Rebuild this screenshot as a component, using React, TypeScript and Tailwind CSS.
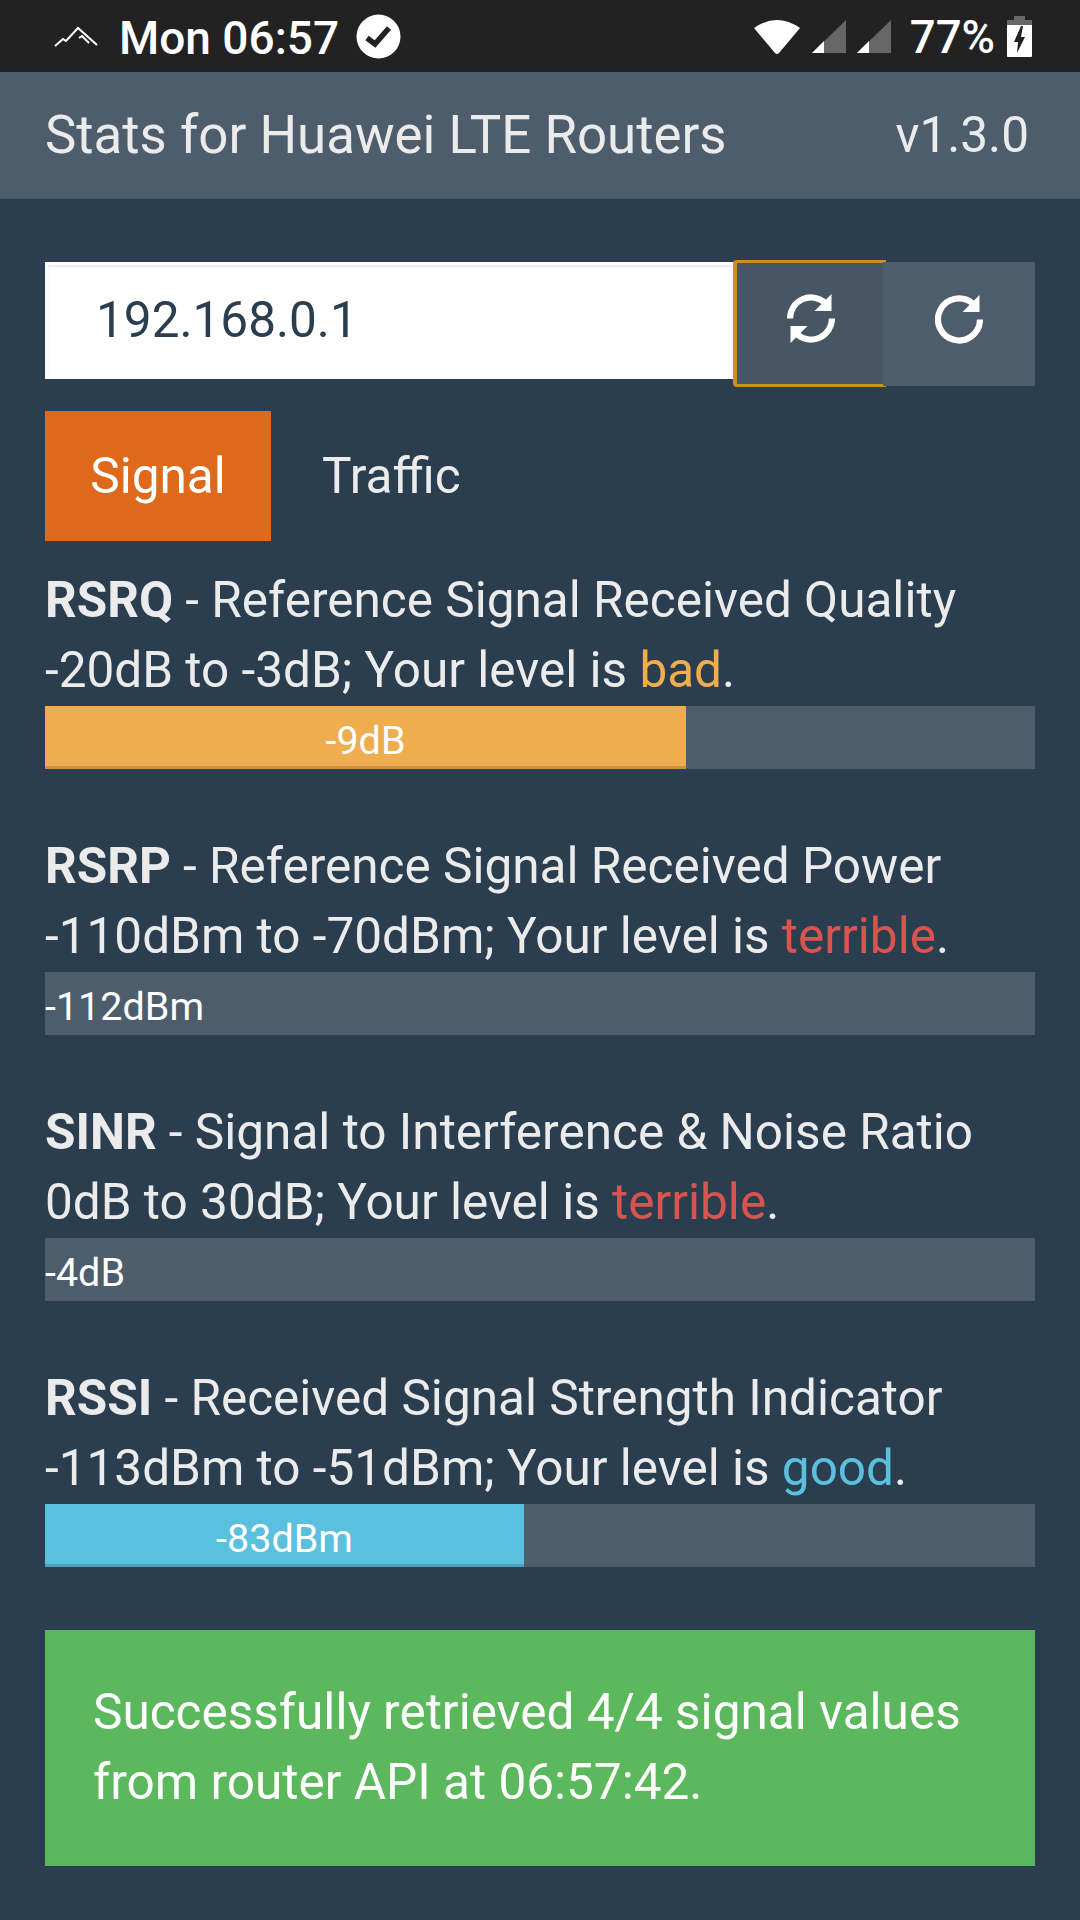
const levelColors: Record<string, string> = {
  bad: "text-[#f0ad4e]",
  terrible: "text-[#d9534f]",
  good: "text-[#5bc0de]",
};

const stats = [
  { name: "RSRQ", title: "Reference Signal Received Quality", range: "-20dB to -3dB", level: "bad", value: "-9dB", width: 641, fill: "bg-[#eead4f]" },
  { name: "RSRP", title: "Reference Signal Received Power", range: "-110dBm to -70dBm", level: "terrible", value: "-112dBm", width: 0, fill: "" },
  { name: "SINR", title: "Signal to Interference & Noise Ratio", range: "0dB to 30dB", level: "terrible", value: "-4dB", width: 0, fill: "" },
  { name: "RSSI", title: "Received Signal Strength Indicator", range: "-113dBm to -51dBm", level: "good", value: "-83dBm", width: 479, fill: "bg-[#5bc0de]" },
];

function SyncIcon() {
  return (
    <svg className="mb-[10px] mr-[2px]" width="48" height="49" viewBox="0 0 48 49" fill="white">
      <path d="M3 24.5 A21 21 0 0 1 38 8.8" fill="none" stroke="white" strokeWidth="6.2" />
      <path d="M45 24.5 A21 21 0 0 1 10 40.2" fill="none" stroke="white" strokeWidth="6.2" />
      <path d="M44.5 0 V17 H27.5 Z" />
      <path d="M3.5 49 V32 H20.5 Z" />
    </svg>
  );
}

function RedoIcon() {
  return (
    <svg className="mb-[10px]" width="48" height="49" viewBox="0 0 48 49" fill="white">
      <path d="M38 8.8 A21 21 0 1 0 45 24.5" fill="none" stroke="white" strokeWidth="6.2" />
      <path d="M44.5 0 V17 H27.5 Z" />
    </svg>
  );
}

function StatusBar() {
  return (
    <div className="h-[72px] bg-[#222222] flex items-center justify-between pl-[54px] pr-[48px] text-white">
      <div className="flex items-center">
        <svg width="44" height="24" viewBox="0 0 44 24" fill="none" stroke="white" strokeWidth="2">
          <path d="M1 22 L9 15 L12 17 L24 4 L43 21" />
          <path d="M25 14 L28 12 L35 19" />
        </svg>
        <span className="ml-[21px] mt-[3px] text-[46px] font-medium leading-none">Mon 06:57</span>
        <svg className="ml-[17px]" width="45" height="45" viewBox="0 0 45 45">
          <circle cx="22.5" cy="22.5" r="22" fill="white" />
          <path d="M11 24 L19 30 L33 14" fill="none" stroke="#222222" strokeWidth="5.5" />
        </svg>
      </div>
      <div className="flex items-center">
        <svg width="46" height="37" viewBox="0 0 46 37">
          <path d="M0 10 Q23 -6 46 10 L25 35 Q23 37 21 35 Z" fill="white" />
        </svg>
        <svg className="ml-[12px]" width="34" height="34" viewBox="0 0 34 34">
          <path d="M34 1 L34 34 L0 34 Z" fill="#666666" />
          <path d="M12 22 L12 34 L0 34 Z" fill="white" />
        </svg>
        <svg className="ml-[11px]" width="34" height="34" viewBox="0 0 34 34">
          <path d="M34 1 L34 34 L0 34 Z" fill="#666666" />
          <path d="M12 22 L12 34 L0 34 Z" fill="white" />
        </svg>
        <span className="ml-[19px] mt-[3px] text-[45.5px] font-medium leading-none">77%</span>
        <svg className="ml-[12px]" width="25" height="41" viewBox="0 0 25 41">
          <path d="M7 0 H18 V4 H25 V10 H0 V4 H7 Z" fill="#666666" />
          <path d="M0 9 H25 V40 Q25 41 24 41 H1 Q0 41 0 40 Z" fill="white" />
          <path d="M14 10 L7 26 H11 L10 37 L18 21 H14 L16 10 Z" fill="#222222" />
        </svg>
      </div>
    </div>
  );
}

function StatBlock({ stat }: { stat: (typeof stats)[number] }) {
  return (
    <div className="mb-[62px]">
      <p>
        <b className="font-bold">{stat.name}</b> - {stat.title}
        <br />
        {stat.range}; Your level is <span className={levelColors[stat.level]}>{stat.level}</span>.
      </p>
      <div className="h-[63px] bg-[#4e5d6c] text-white text-[39.5px] leading-[70px] flex overflow-hidden mt-[1px]">
        {stat.width > 0 ? (
          <div
            className={`${stat.fill} text-center h-full shadow-[inset_0_-3px_0_rgba(0,0,0,0.15)]`}
            style={{ width: stat.width }}
          >
            {stat.value}
          </div>
        ) : (
          <span>{stat.value}</span>
        )}
      </div>
    </div>
  );
}

export default function App() {
  return (
    <div
      className="w-[1080px] h-[1920px] bg-[#2b3e50] text-[#ebebeb] text-[49.5px] leading-[70px] overflow-hidden"
      style={{ fontFamily: "Roboto, sans-serif" }}
    >
      <StatusBar />
      <header className="h-[127px] pb-[1px] bg-[#4e5d6c] flex items-center justify-between pl-[45px] pr-[51px] shadow-[inset_0_-1px_0_rgba(0,0,0,0.1)]">
        <span className="text-[52.8px]">Stats for Huawei LTE Routers</span>
        <span>v1.3.0</span>
      </header>

      <main className="px-[45px] pt-[63px]">
        <div className="flex h-[117px] relative">
          <div className="w-[690px] h-[117px] bg-white border-[3px] border-white shadow-[inset_0_2px_2px_rgba(0,0,0,0.08)] text-[#2b3e50] leading-[110px] pl-[48px]">
            192.168.0.1
          </div>
          <button className="w-[153px] h-[127px] -mt-[2px] -ml-[2px] bg-[#485563] border-[3px] border-l-4 border-r-0 border-[#cb911f] rounded-l-[4px] flex items-center justify-center relative">
            <SyncIcon />
          </button>
          <button className="w-[152px] h-[124px] -ml-[3px] bg-[#4e5d6c] flex items-center justify-center relative">
            <RedoIcon />
          </button>
        </div>

        <div className="flex mt-[32px] h-[130px]">
          <div className="w-[226px] bg-[#df691a] text-white flex items-center justify-center">Signal</div>
          <div className="ml-[51px] flex items-center">Traffic</div>
        </div>

        <div className="mt-[24px] pb-[1px]">
          {stats.map((stat) => (
            <StatBlock key={stat.name} stat={stat} />
          ))}
        </div>

        <div className="h-[236px] bg-[#5cb85c] text-white px-[48px] py-[47px]">
          Successfully retrieved 4/4 signal values
          <br />
          from router API at 06:57:42.
        </div>
      </main>
    </div>
  );
}
